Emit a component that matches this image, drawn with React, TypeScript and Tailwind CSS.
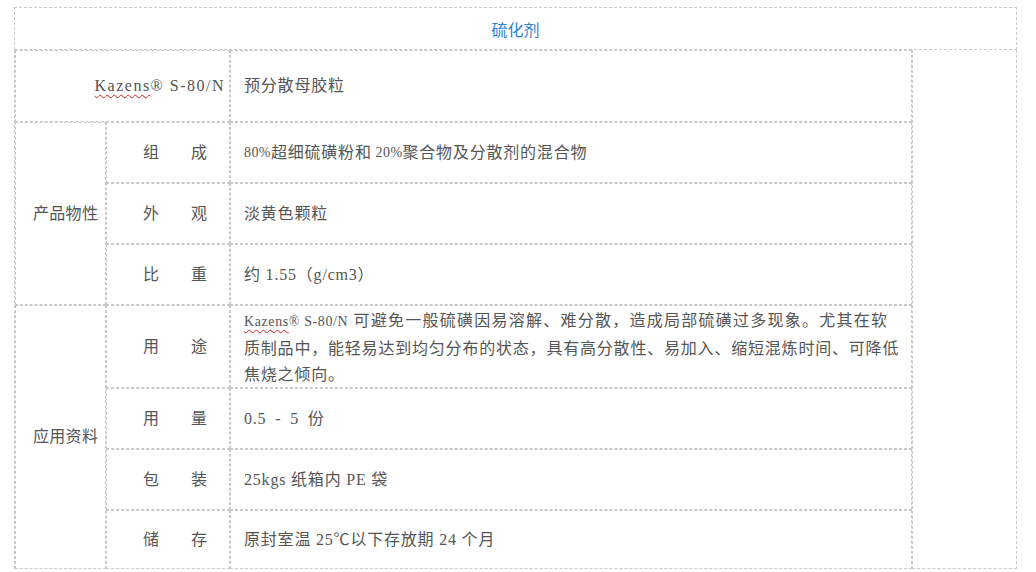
import React from "react";

const cell = "border border-dashed border-[#c8c8c8] flex items-center";

const Label = ({a, b}: {a: string; b: string}) => (
  <div className={`${cell} pl-[36px] gap-[32px]`}>
    <span>{a}</span>
    <span>{b}</span>
  </div>
);

const Value = ({children}: {children: React.ReactNode}) => (
  <div className={`${cell} pl-[13px] tracking-[0.8px] whitespace-nowrap`}>{children}</div>
);

const Brand = ({small}: {small?: boolean}) => (
  <span className={small ? "text-[14px] tracking-[0.6px]" : "tracking-[1.5px]"}>
    <span className="underline decoration-wavy decoration-[#d42020] decoration-1 underline-offset-[3px]">
      Kazens
    </span>
    ® S-80/N
  </span>
);

export default function App() {
  return (
    <div className="w-[1036px] h-[572px] overflow-hidden bg-white pt-[7px] pl-[14px] text-[16px] text-[#555] font-['Liberation_Serif','Noto_Sans_CJK_SC',serif]">
      <div className="w-[1003px]">
        {/* title row */}
        <div className="h-[43px] border border-dashed border-[#c8c8c8] flex items-center justify-center font-['Noto_Sans_CJK_SC',sans-serif] text-[#2b80d5] pt-[1px]">
          硫化剂
        </div>
        <div className="flex">
          <div className="border-l border-dashed border-[#c8c8c8]">
            <div className="grid w-[897px] grid-cols-[91px_124px_682px] grid-rows-[72px_61px_61px_61px_83px_61px_61px_59px]">
              <div className={`${cell} col-span-2 justify-end pr-[2px] pl-0`}>
                <span className="mr-[2px]">
                  <Brand />
                </span>
              </div>
              <Value>预分散母胶粒</Value>

              <div className={`${cell} row-span-3 pl-[17px] tracking-[0.3px]`}>产品物性</div>
              <Label a="组" b="成" />
              <Value>
                <span className="text-[14px] tracking-[0.4px]">80%</span>超细硫磺粉和
                <span className="text-[14px] tracking-[0.4px]">&nbsp;20%</span>聚合物及分散剂的混合物
              </Value>
              <Label a="外" b="观" />
              <Value>淡黄色颗粒</Value>
              <Label a="比" b="重" />
              <Value>约 1.55（g/cm3）</Value>

              <div className={`${cell} row-span-4 pl-[17px] tracking-[0.3px]`}>应用资料</div>
              <Label a="用" b="途" />
              <div className={`${cell} pl-[13px] pt-[4px] leading-[26.5px] whitespace-nowrap`}>
                <div>
                  <span className="tracking-[1.25px]">
                    <Brand small /> 可避免一般硫磺因易溶解、难分散，造成局部硫磺过多现象。尤其在软
                  </span>
                  <br />
                  <span className="tracking-[0.8px]">
                    质制品中，能轻易达到均匀分布的状态，具有高分散性、易加入、缩短混炼时间、可降低
                  </span>
                  <br />
                  <span className="tracking-[0.8px]">焦烧之倾向。</span>
                </div>
              </div>
              <Label a="用" b="量" />
              <Value>
                <span className="[word-spacing:4px]">0.5 - 5 份</span>
              </Value>
              <Label a="包" b="装" />
              <Value>25kgs 纸箱内 PE 袋</Value>
              <Label a="储" b="存" />
              <Value>原封室温 25℃以下存放期 24 个月</Value>
            </div>
          </div>
          <div className="flex-1 border border-t-0 border-dashed border-[#c8c8c8]" />
        </div>
      </div>
    </div>
  );
}
